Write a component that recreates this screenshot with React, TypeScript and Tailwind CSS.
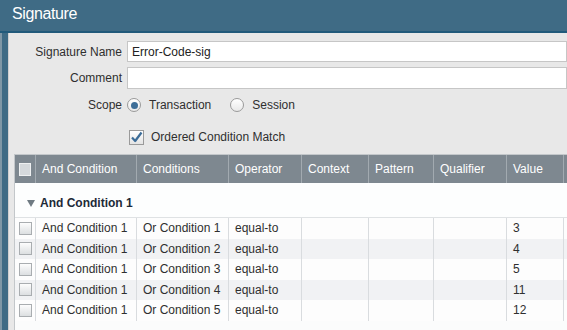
import React from 'react';

const cols = 'grid grid-cols-[21px_101px_92px_73px_67px_65px_73px_57px_1fr]';

const headers = ['And Condition', 'Conditions', 'Operator', 'Context', 'Pattern', 'Qualifier', 'Value', ''];

const rows = [
  { and: 'And Condition 1', or: 'Or Condition 1', op: 'equal-to', value: '3' },
  { and: 'And Condition 1', or: 'Or Condition 2', op: 'equal-to', value: '4' },
  { and: 'And Condition 1', or: 'Or Condition 3', op: 'equal-to', value: '5' },
  { and: 'And Condition 1', or: 'Or Condition 4', op: 'equal-to', value: '11' },
  { and: 'And Condition 1', or: 'Or Condition 5', op: 'equal-to', value: '12' },
];

const RowCheck: React.FC = () => (
  <div className="w-[13px] h-[13px] border border-[#a9adb0] bg-gradient-to-b from-[#fdfdfd] to-[#dcdfe1]" />
);

const Radio: React.FC<{ checked?: boolean }> = ({ checked }) => (
  <div className="w-[14px] h-[14px] rounded-full border border-[#9a9a9a] bg-gradient-to-b from-white to-[#e9e9e9] flex items-center justify-center">
    {checked && <div className="w-[7px] h-[7px] rounded-full bg-[#3d6e98]" />}
  </div>
);

export default function App() {
  return (
    <div
      className="w-[567px] h-[330px] overflow-hidden bg-[#3f6b85] flex flex-col text-[12px] text-[#2f2f2f]"
      style={{ fontFamily: '"Liberation Sans", Arial, sans-serif' }}
    >
      {/* Title bar */}
      <div className="h-[33px] shrink-0 flex items-center pl-[12px] pb-[3px] border-b-2 border-[#215a7b]">
        <span className="text-white text-[16px] tracking-[-0.4px]">Signature</span>
      </div>

      <div className="flex-1 flex min-h-0">
        <div className="w-[2px] bg-[#7f97a6]" />
        <div className="w-[6px] bg-[#3f6b85]" />

        {/* Panel */}
        <div className="flex-1 bg-[#e8e8e8] border-l border-[#d0d0d0] pt-[8px] flex flex-col min-w-0">
          <div className="flex items-center gap-[5px]">
            <div className="w-[113px] text-right">Signature Name</div>
            <div className="flex-1 h-[21px] bg-white border border-[#c6c6c6] flex items-center pl-[4px] text-[#222]">
              Error-Code-sig
            </div>
          </div>
          <div className="flex items-center gap-[5px] mt-[5px]">
            <div className="w-[113px] text-right">Comment</div>
            <div className="flex-1 h-[22px] bg-white border border-[#c6c6c6]" />
          </div>
          <div className="flex items-center gap-[5px] mt-[4px] h-[24px]">
            <div className="w-[113px] text-right">Scope</div>
            <div className="flex items-center gap-[8px]">
              <Radio checked />
              <span>Transaction</span>
            </div>
            <div className="flex items-center gap-[8px] ml-[14px]">
              <Radio />
              <span>Session</span>
            </div>
          </div>
          <div className="flex items-center mt-[11px] h-[18px] pl-[120px] gap-[7px]">
            <div className="w-[15px] h-[15px] border border-[#9a9a9a] bg-gradient-to-b from-white to-[#e4e4e4] flex items-center justify-center">
              <svg width="13" height="13" viewBox="0 0 13 13">
                <path d="M2 6.5 L5.2 10 L11.5 1.5" fill="none" stroke="#3b6c98" strokeWidth="2.2" strokeLinejoin="round" />
              </svg>
            </div>
            <span>Ordered Condition Match</span>
          </div>

          {/* Table */}
          <div className="mt-[8px] ml-[5px] flex-1 bg-[#fbfcfc] border-l border-t border-[#c3c7ca] flex flex-col">
            <div className={`${cols} h-[28px] bg-[#7e8890] text-white`}>
              <div className="border-r border-[#a2aab0] flex items-center justify-center">
                <div className="w-[12px] h-[13px] border border-[#eef0f1] bg-[#d5d9dc]" />
              </div>
              {headers.map((h, i) => (
                <div key={i} className="border-r border-[#a2aab0] flex items-center pl-[6px] whitespace-nowrap">
                  {h}
                </div>
              ))}
            </div>

            <div className="h-[35px] bg-[#fdfefe] border-b border-[#dfe2e4] flex items-center pl-[12px] pt-[6px] gap-[5px]">
              <svg width="8" height="7" viewBox="0 0 8 7">
                <polygon points="0,0 8,0 4,7" fill="#6f7a82" />
              </svg>
              <span className="font-bold text-[#1d2a38]">And Condition 1</span>
            </div>

            {rows.map((r, i) => (
              <div key={i} className={`${cols} h-[20.5px] ${i % 2 === 1 ? 'bg-[#f1f2f4]' : 'bg-[#fdfdfd]'}`}>
                <div className="border-r border-[#d9dcdf] flex items-center justify-center">
                  <RowCheck />
                </div>
                <div className="border-r border-[#d9dcdf] flex items-center pl-[6px] whitespace-nowrap">{r.and}</div>
                <div className="border-r border-[#d9dcdf] flex items-center pl-[6px] whitespace-nowrap">{r.or}</div>
                <div className="border-r border-[#d9dcdf] flex items-center pl-[6px]">{r.op}</div>
                <div className="border-r border-[#d9dcdf]" />
                <div className="border-r border-[#d9dcdf]" />
                <div className="border-r border-[#d9dcdf]" />
                <div className="border-r border-[#d9dcdf] flex items-center pl-[6px]">{r.value}</div>
                <div />
              </div>
            ))}
          </div>
        </div>
      </div>
    </div>
  );
}
